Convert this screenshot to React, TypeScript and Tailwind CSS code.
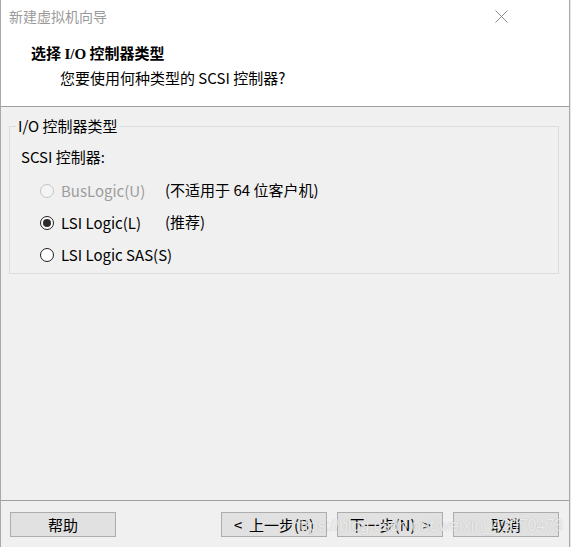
import React from 'react';

const ui = { fontFamily: '"Noto Sans CJK SC", "Noto Sans", sans-serif' };

const Radio = ({ checked = false, disabled = false }: { checked?: boolean; disabled?: boolean }) => (
  <span
    className={`flex h-[14px] w-[14px] shrink-0 items-center justify-center rounded-full border ${
      disabled ? 'border-[#c4c4c4] bg-[#f4f4f4]' : 'border-[#1f1f1f] bg-white'
    }`}
  >
    {checked && <span className="h-[8px] w-[8px] rounded-full bg-[#2b2b2b]" />}
  </span>
);

const options = [
  { label: 'BusLogic(U)', note: '(不适用于 64 位客户机)', disabled: true, checked: false },
  { label: 'LSI Logic(L)', note: '(推荐)', disabled: false, checked: true },
  { label: 'LSI Logic SAS(S)', note: '', disabled: false, checked: false },
];

const WizButton = ({ children }: { children: React.ReactNode }) => (
  <button className="h-[25px] w-[106px] whitespace-pre border border-[#adadad] bg-[#e1e1e1] text-[15px] leading-[23px] text-black">
    {children}
  </button>
);

export default function App() {
  return (
    <div className="flex h-[547px] w-[571px] overflow-hidden bg-[#dcdcdc]" style={ui}>
      <div className="relative flex h-[547px] w-[570px] flex-col border-x border-[#a9a9a9] bg-[#f0f0f0]">
        {/* header */}
        <div className="h-[107px] border-b border-[#a0a0a0] bg-white">
          <div className="flex h-[32px] items-center justify-between pl-[8px] pr-[61px]">
            <span className="text-[14px] text-[#9a9a9a]">新建虚拟机向导</span>
            <svg width="13" height="13" viewBox="0 0 13 13">
              <path d="M0.5 0.5 L12.5 12.5 M12.5 0.5 L0.5 12.5" stroke="#8a8a8a" strokeWidth="1" fill="none" />
            </svg>
          </div>
          <div className="pl-[30px] pt-[10px] text-[15px] font-bold leading-[22px] text-black">
            选择 <span style={{ fontFamily: '"Liberation Serif", serif' }}>I/O</span> 控制器类型
          </div>
          <div className="pl-[59px] pt-[2px] text-[15px] leading-[22px] text-black">
            您要使用何种类型的 SCSI 控制器?
          </div>
        </div>

        {/* body */}
        <div className="flex-1">
          <fieldset className="ml-[8px] mt-[9px] w-[550px] border border-[#dcdcdc] pb-[8px] pl-[11px]">
            <legend className="-ml-[5px] px-[2px] text-[15px] leading-[20px] text-black">I/O 控制器类型</legend>
            <div className="pt-[11px] text-[15px] leading-[20px] text-black">SCSI 控制器:</div>
            <div className="mt-[14px] flex flex-col gap-[12px] pl-[19px]">
              {options.map((o) => (
                <div key={o.label} className="flex h-[20px] items-center whitespace-nowrap text-[15px] leading-[20px]">
                  <Radio checked={o.checked} disabled={o.disabled} />
                  <span className={`ml-[7px] min-w-[104px] ${o.disabled ? 'text-[#9d9d9d]' : 'text-black'}`}>{o.label}</span>
                  {o.note && <span className="-mt-[3px] text-black">{o.note}</span>}
                </div>
              ))}
            </div>
          </fieldset>
        </div>

        {/* footer */}
        <div className="flex h-[47px] items-start border-t border-[#a0a0a0] pl-[9px] pr-[10px] pt-[11px]">
          <WizButton>帮助</WizButton>
          <div className="flex-1" />
          <div className="flex gap-[10px]">
            <WizButton>{'<  上一步(B)'}</WizButton>
            <WizButton>{'下一步(N)  >'}</WizButton>
            <WizButton>取消</WizButton>
          </div>
        </div>

        {/* watermark */}
        <div
          className="pointer-events-none absolute left-[290px] top-[516px] whitespace-nowrap text-[16px] leading-[20px] text-white/75"
          style={{ fontFamily: '"Liberation Sans", sans-serif', textShadow: '0 0 1px rgba(120,120,120,0.5)' }}
        >
          https://blog.csdn.net/weixin_42070473
        </div>
      </div>
      <div className="h-[547px] w-px bg-[#e6e6e6]" />
    </div>
  );
}
